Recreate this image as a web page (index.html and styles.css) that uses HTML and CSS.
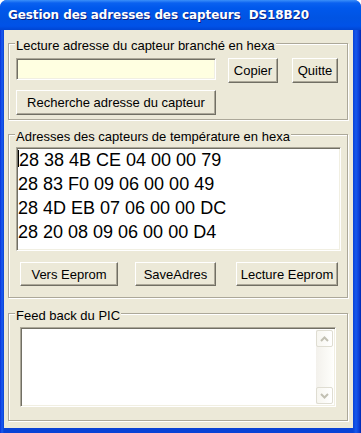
FILE: index.html
```html
<!DOCTYPE html>
<html>
<head>
    <title>Gestion des adresses des capteurs DS18B20</title>
    <link rel="stylesheet" href="styles.css">
</head>
<body>
    <div class="window">
        <div class="titlebar">
            <span class="title">Gestion des adresses des capteurs&nbsp; DS18B20</span>
        </div>
        <div class="client">
            <div class="group" id="groupLecture">
                <span class="legend">Lecture adresse du capteur branché en hexa</span>
                <div class="row">
                    <input class="field" id="adresseLue" type="text">
                    <button class="btn" id="copierButton">Copier</button>
                    <button class="btn" id="quitteButton">Quitte</button>
                </div>
                <div class="row">
                    <button class="btn" id="rechercheButton">Recherche adresse du capteur</button>
                </div>
            </div>

            <div class="group" id="groupAdresses">
                <span class="legend">Adresses des capteurs de température en hexa</span>
                <div class="memo"><span class="caret"></span>28 38 4B CE 04 00 00 79<br>28 83 F0 09 06 00 00 49<br>28 4D EB 07 06 00 00 DC<br>28 20 08 09 06 00 00 D4</div>
                <div class="row buttons">
                    <button class="btn" id="versButton">Vers Eeprom</button>
                    <button class="btn" id="saveButton">SaveAdres</button>
                    <button class="btn" id="lectureButton">Lecture Eeprom</button>
                </div>
            </div>

            <div class="group" id="groupFeedback">
                <span class="legend">Feed back du PIC</span>
                <div class="feedback">
                    <div class="feedback-text"></div>
                    <div class="scrollbar">
                        <div class="arrow">
                            <svg width="9" height="6" viewBox="0 0 9 6"><path d="M1 5 L4.5 1.5 L8 5" fill="none" stroke="#c2c0b3" stroke-width="2"/></svg>
                        </div>
                        <div class="track"></div>
                        <div class="arrow">
                            <svg width="9" height="6" viewBox="0 0 9 6"><path d="M1 1 L4.5 4.5 L8 1" fill="none" stroke="#c2c0b3" stroke-width="2"/></svg>
                        </div>
                    </div>
                </div>
            </div>
        </div>
    </div>
</body>
</html>
```

FILE: styles.css
```css
body {
    margin: 0;
    background-color: #ffffff;
    font-family: "Liberation Sans", Arial, sans-serif;
    font-size: 13px;
}
.window {
    width: 361px;
    height: 433px;
    display: flex;
    flex-direction: column;
    background: linear-gradient(90deg, #0831d9 0, #1a5cf0 2px, #0842d6 4px, #0842d6 353px, #1658ec 356px, #0b3fd6 359px, #0027b0 361px);
    border-radius: 7px 7px 0 0;
    overflow: hidden;
}
.titlebar {
    height: 30px;
    flex: none;
    display: flex;
    align-items: center;
    padding-left: 8px;
    background: linear-gradient(#3b8ff9 0, #0a61f0 3px, #0058ec 8px, #0054e3 18px, #0052e8 26px, #0045d2 30px);
}
.title {
    color: #ffffff;
    font-family: "DejaVu Sans", sans-serif;
    font-weight: bold;
    font-size: 12px;
    letter-spacing: -0.1px;
    text-shadow: 1px 1px #0a1e80;
    margin-top: -1px;
}
.client {
    flex: 1;
    margin: 0 8px 5px 4px;
    background-color: #ece9d8;
    padding-top: 13px;
}
.group {
    position: relative;
    width: 340px;
    box-sizing: border-box;
    margin-left: 4px;
    border: 1px solid #aca899;
    box-shadow: inset 1px 1px #ffffff, 1px 1px #ffffff;
    padding-left: 7px;
}
.legend {
    position: absolute;
    top: -6px;
    left: 6px;
    padding: 0 1px;
    line-height: 15px;
    background-color: #ece9d8;
    color: #000000;
    white-space: nowrap;
}
.row {
    display: flex;
    align-items: flex-start;
}
.field {
    width: 200px;
    height: 22px;
    box-sizing: border-box;
    margin: 0;
    padding: 0 3px;
    background-color: #ffffe1;
    border: 1px solid;
    border-color: #aca899 #ffffff #ffffff #aca899;
    box-shadow: inset 1px 1px #716f64, inset -1px -1px #f1efe2;
    font-family: "Liberation Sans", Arial, sans-serif;
    font-size: 13px;
    outline: none;
}
.btn {
    height: 25px;
    box-sizing: border-box;
    margin: 0;
    padding: 0;
    background-color: #ece9d8;
    border: 1px solid;
    border-color: #ffffff #716f64 #716f64 #ffffff;
    box-shadow: inset -1px -1px #aca899;
    font-family: "Liberation Sans", Arial, sans-serif;
    font-size: 13px;
    color: #000000;
    cursor: pointer;
}
#groupLecture {
    padding-top: 14px;
    padding-bottom: 4px;
}
#groupLecture .row + .row {
    margin-top: 7px;
}
#copierButton {
    width: 50px;
    margin-left: 12px;
}
#quitteButton {
    width: 46px;
    margin-left: 14px;
}
#rechercheButton {
    width: 200px;
}
#groupAdresses {
    margin-top: 14px;
    padding-top: 12px;
    padding-bottom: 11px;
}
.memo {
    width: 325px;
    height: 104px;
    box-sizing: border-box;
    padding: 0 0 0 1px;
    background-color: #ffffff;
    border: 1px solid;
    border-color: #aca899 #ffffff #ffffff #aca899;
    box-shadow: inset 1px 1px #716f64, inset -1px -1px #f1efe2;
    font-size: 18px;
    line-height: 24px;
    color: #000000;
    overflow: hidden;
    white-space: nowrap;
}
.caret {
    display: inline-block;
    width: 1px;
    height: 17px;
    background-color: #000000;
    vertical-align: -1px;
}
.buttons {
    margin-top: 11px;
    padding-left: 4px;
}
.buttons .btn {
    height: 24px;
}
#versButton {
    width: 98px;
}
#saveButton {
    width: 81px;
    margin-left: 17px;
}
#lectureButton {
    width: 102px;
    margin-left: 20px;
}
#groupFeedback {
    margin-top: 15px;
    padding-top: 13px;
    padding-left: 11px;
    padding-bottom: 13px;
}
.feedback {
    width: 316px;
    height: 80px;
    box-sizing: border-box;
    display: flex;
    background-color: #ffffff;
    border: 1px solid;
    border-color: #aca899 #ffffff #ffffff #aca899;
    box-shadow: inset 1px 1px #716f64, inset -1px -1px #f1efe2;
    padding: 2px;
}
.feedback-text {
    flex: 1;
}
.scrollbar {
    width: 17px;
    display: flex;
    flex-direction: column;
    background: linear-gradient(90deg, #f3f1ec, #fefefb);
}
.arrow {
    height: 17px;
    box-sizing: border-box;
    display: flex;
    align-items: center;
    justify-content: center;
    border: 1px solid #dfddd2;
    border-radius: 2px;
    background: linear-gradient(90deg, #f7f6f0, #ffffff);
}
.track {
    flex: 1;
}
```
